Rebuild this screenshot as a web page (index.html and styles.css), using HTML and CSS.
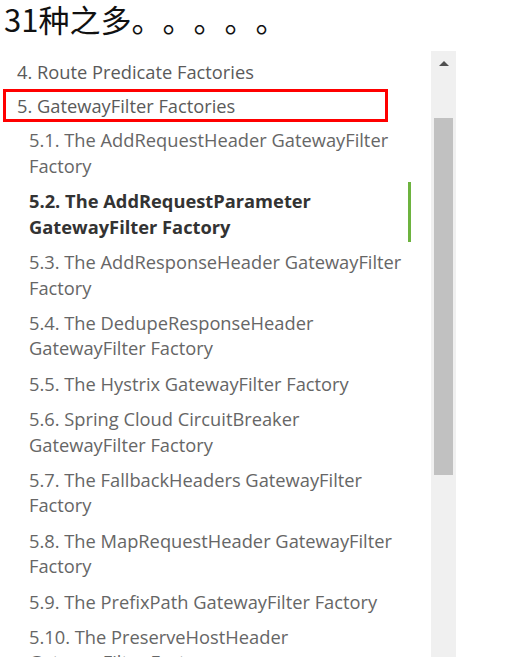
FILE: index.html
```html
<!DOCTYPE html>
<html lang="zh-CN">
<head>
<meta charset="utf-8">
<title>GatewayFilter Factories</title>
<link rel="stylesheet" href="styles.css">
</head>
<body>
<p class="title">31种之多。。。。。</p>
<div class="panel">
  <nav class="toc">
    <ul class="toc-list">
      <li class="toc-top">4. Route Predicate Factories</li>
      <li class="toc-top toc-boxed">5. GatewayFilter Factories</li>
      <li class="toc-sub-wrap">
        <ul class="toc-sub">
          <li>5.1. The AddRequestHeader GatewayFilter<br>Factory</li>
          <li class="active">5.2. The AddRequestParameter<br>GatewayFilter Factory</li>
          <li>5.3. The AddResponseHeader GatewayFilter<br>Factory</li>
          <li>5.4. The DedupeResponseHeader<br>GatewayFilter Factory</li>
          <li>5.5. The Hystrix GatewayFilter Factory</li>
          <li>5.6. Spring Cloud CircuitBreaker<br>GatewayFilter Factory</li>
          <li>5.7. The FallbackHeaders GatewayFilter<br>Factory</li>
          <li>5.8. The MapRequestHeader GatewayFilter<br>Factory</li>
          <li>5.9. The PrefixPath GatewayFilter Factory</li>
          <li>5.10. The PreserveHostHeader<br>GatewayFilter Factory</li>
        </ul>
      </li>
    </ul>
  </nav>
  <div class="scrollbar">
    <div class="scroll-arrow"></div>
    <div class="scroll-thumb"></div>
  </div>
</div>
</body>
</html>
```

FILE: styles.css
```css
html, body {
  margin: 0;
  padding: 0;
  background: #fff;
  height: 657px;
  overflow: hidden;
}

.title {
  margin: 0;
  padding: 1px 0 0 4px;
  height: 50px;
  font-family: "Noto Sans CJK SC", "Microsoft YaHei", sans-serif;
  font-size: 31px;
  line-height: 36px;
  color: #111;
  text-spacing-trim: space-all;
  white-space: nowrap;
}

.panel {
  display: flex;
  align-items: flex-start;
}

.toc {
  width: 431px;
  flex: none;
  font-family: "Open Sans", sans-serif;
  font-size: 18.3px;
  color: #666;
}

.toc-list {
  list-style: none;
  margin: 0;
  padding: 8px 0 0 3px;
}

.toc-top {
  line-height: 25.6px;
  padding-left: 14px;
  color: #5a5a5a;
  white-space: nowrap;
}

.toc-boxed {
  box-sizing: border-box;
  width: 385px;
  margin-top: 4px;
  border: 3px solid #f00;
  padding: 1px 0 1px 11px;
}

.toc-sub-wrap {
  padding-top: 5px;
}

.toc-sub {
  list-style: none;
  margin: 0;
  padding: 0 0 0 26px;
  width: 382px;
  display: flex;
  flex-direction: column;
  gap: 9.7px;
}

.toc-sub li {
  line-height: 25.6px;
  white-space: nowrap;
}

.toc-sub li.active {
  font-weight: 700;
  color: #333;
  border-right: 3px solid #6db33f;
  padding: 6px 0 3px;
  margin: -6px 0 -3px;
}

.scrollbar {
  width: 25px;
  height: 606px;
  flex: none;
  background: #f0f0f0;
  display: flex;
  flex-direction: column;
  align-items: center;
}

.scroll-arrow {
  margin-top: 10px;
  width: 0;
  height: 0;
  border-left: 5px solid transparent;
  border-right: 5px solid transparent;
  border-bottom: 5px solid #505050;
}

.scroll-thumb {
  margin-top: 52px;
  width: 19px;
  height: 357px;
  background: #c1c1c1;
}
```
